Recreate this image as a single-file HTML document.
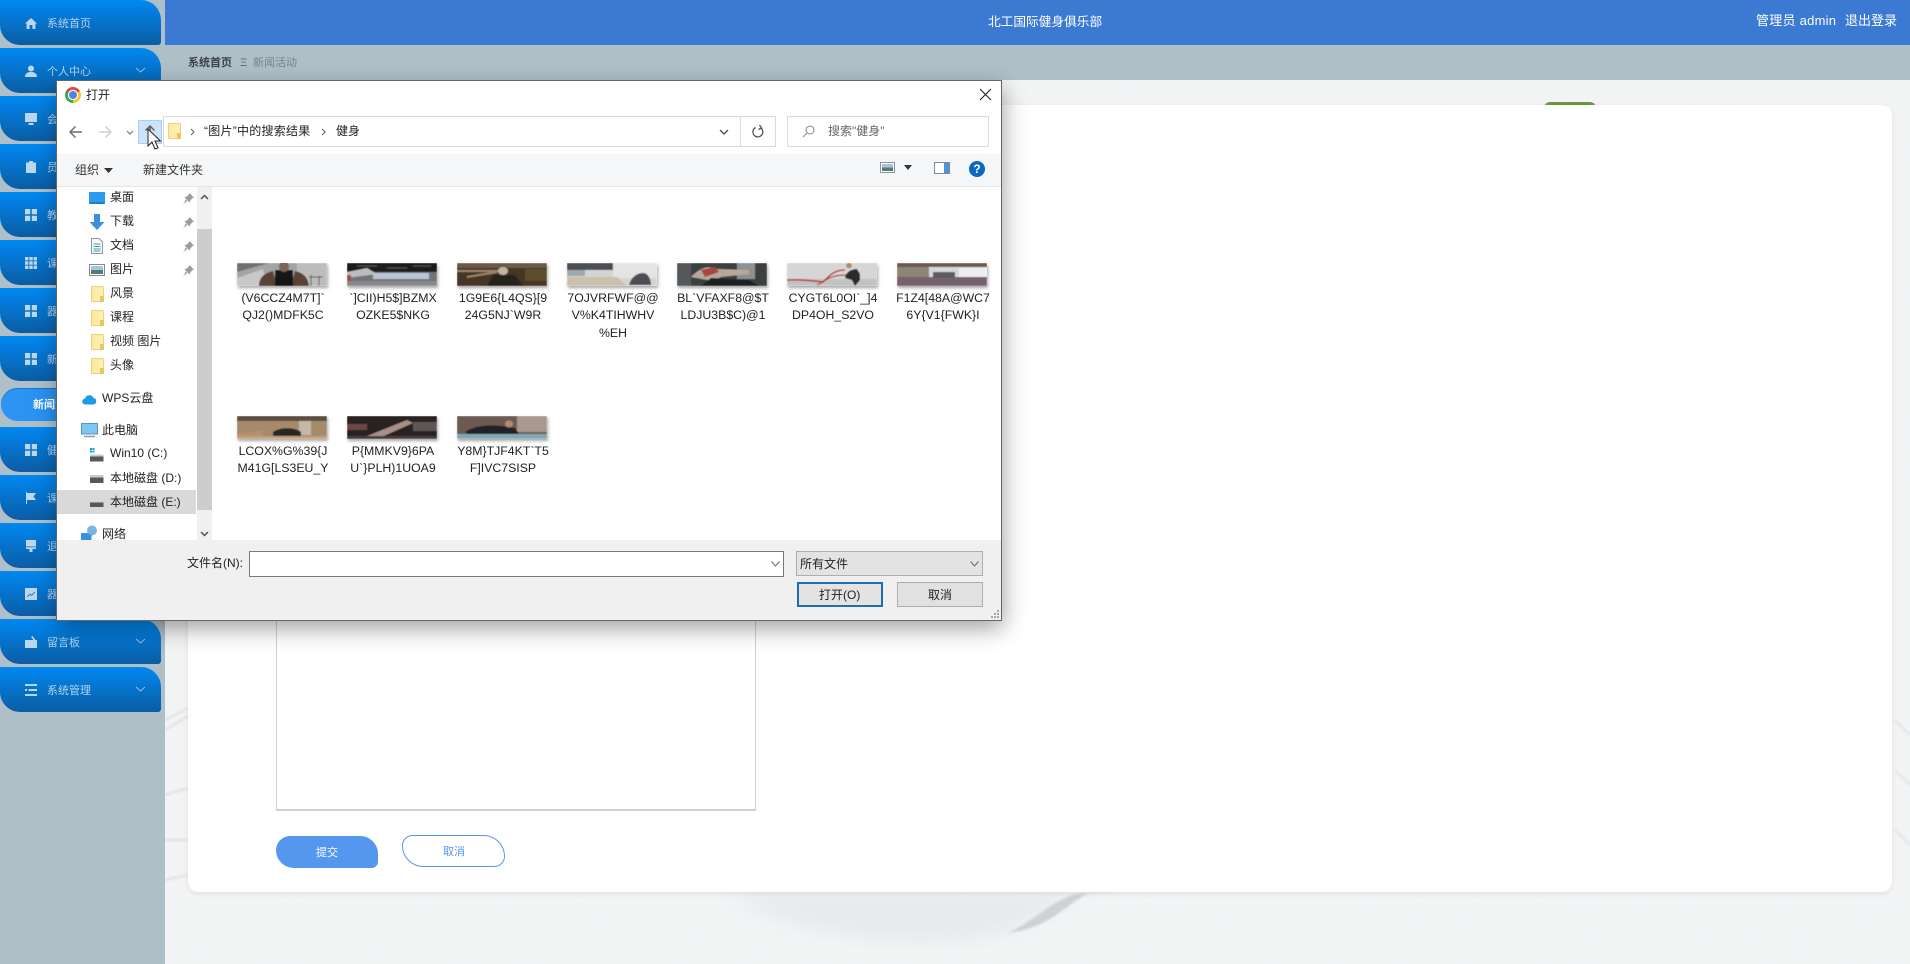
<!DOCTYPE html>
<html lang="zh-CN"><head><meta charset="utf-8"><title>打开</title>
<style>
*{box-sizing:border-box}
html,body{margin:0;padding:0;width:1910px;height:964px;overflow:hidden;background:#f5f6f7;font-family:"Liberation Sans","Noto Sans CJK SC",sans-serif;}
.a{position:absolute}
.t{position:absolute;white-space:nowrap;line-height:16px;font-size:12px;color:#222}
.side{left:0;top:0;width:165px;height:964px;background:#aebfc8}
.crumb{left:165px;top:45px;width:1745px;height:35px;background:#aebfc8}
.head{left:165px;top:0;width:1745px;height:45px;background:#3c79d3}
.it{position:absolute;left:0;width:161px;height:45px;border-radius:0 20px 3px 20px;background:linear-gradient(#0088f2,#0b5da3)}
.it span{position:absolute;left:47px;top:16px;font-size:11px;line-height:16px;color:#b4d2ee;white-space:nowrap}
.it svg.i{position:absolute;left:25px;top:17px;width:12px;height:12px;fill:#bcd6ee}
.it svg.c{position:absolute;left:135px;top:19px;width:11px;height:6px;fill:none;stroke:#8fc0ea;stroke-width:1}
.card{left:188px;top:105px;width:1704px;height:787px;background:#fff;border-radius:10px;box-shadow:0 2px 6px rgba(0,0,0,.08)}
.dlg{left:57px;top:81px;width:944px;height:539px;background:#fff;box-shadow:0 0 0 1px #666,2px 8px 22px rgba(0,0,0,.38)}
.th{position:absolute;width:90px;height:23px;box-shadow:1px 2px 3px rgba(0,0,0,.35);overflow:hidden}
.th svg{display:block;width:90px;height:23px}
.fn{position:absolute;width:110px;text-align:center;font-size:12.3px;line-height:17.3px;color:#222;transform:translateX(1px)}
.nv svg{position:absolute}
.pin{position:absolute;width:11px;height:11px;fill:#9a9a9a}
.fold{position:absolute;left:34px;width:13px;height:16px;background:linear-gradient(90deg,#fde9a0,#ffefb4);border:1px solid #ecd27a;border-radius:1px}
.fold:after{content:"";position:absolute;right:-1px;bottom:-1px;width:4px;height:6px;background:#e9c65c}
</style></head><body>
<svg class="a" width="0" height="0"><defs><filter id="b"><feGaussianBlur stdDeviation=".6"/></filter><filter id="b1"><feGaussianBlur stdDeviation="1"/></filter><filter id="b2"><feGaussianBlur stdDeviation="9"/></filter><filter id="n"><feTurbulence type="fractalNoise" baseFrequency=".9" numOctaves="2"/><feColorMatrix values="0 0 0 0 .5 0 0 0 0 .5 0 0 0 0 .5 0 0 0 .5 0"/></filter></defs></svg>

<div class="a side"></div>
<div class="a crumb"></div>
<svg class="a" style="left:165px;top:80px" width="1745" height="884">
<rect width="1745" height="884" filter="url(#n)" opacity=".16"/>
<g filter="url(#b1)" opacity=".7">
<path d="M0 640 L23 628 M0 650 L23 636 M0 715 L23 708 M0 760 L23 760 M0 800 L23 795" stroke="#d4d6d8" stroke-width="2" fill="none"/>
<path d="M1730 640 L1745 655 M1730 690 L1745 705 M1730 750 L1745 765" stroke="#d8dadc" stroke-width="2" fill="none"/>
</g>
<path d="M560 815 C660 870 780 868 843 853 C880 835 905 815 925 812Z" fill="#dcdee0" filter="url(#b2)" opacity=".45"/>
<path d="M843 853 C875 838 890 815 921 813 L960 812 L925 812 C900 825 885 848 843 853 Z" fill="#cfd1d4" filter="url(#b1)"/>
</svg>
<div class="a" style="left:1544px;top:102px;width:52px;height:6px;border-radius:6px 6px 0 0;background:#6d9a38"></div>
<div class="a card"></div>
<div class="a" style="left:276px;top:300px;width:480px;height:511px;border:1px solid #d0d0d0;border-bottom:2px solid #cfcfcf;background:#fff"></div>
<div class="a" style="left:276px;top:836px;width:102px;height:32px;background:#5596ef;border-radius:16px 20px 7px 20px"></div>
<div class="t" style="left:316px;top:845px;font-size:11px;color:#fff">提交</div>
<div class="a" style="left:402px;top:835px;width:103px;height:32px;border:1px solid #5596ef;border-radius:12px 24px 12px 24px;background:#fff"></div>
<div class="t" style="left:443px;top:844px;font-size:11px;color:#5596ef">取消</div>

<div class="a head"></div>
<div class="t" style="left:988px;top:14px;font-size:12.7px;color:#fff">北工国际健身俱乐部</div>
<div class="t" style="left:1756px;top:13px;font-size:13px;letter-spacing:.25px;color:#fff">管理员 admin</div>
<div class="t" style="left:1845px;top:13px;font-size:13px;color:#fff">退出登录</div>
<div class="t" style="left:188px;top:55px;font-size:11px;color:#3a4146;font-weight:700">系统首页</div>
<div class="t" style="left:240px;top:55px;font-size:11px;color:#5d6a72">Ξ</div>
<div class="t" style="left:253px;top:55px;font-size:11px;color:#76838b">新闻活动</div>

<div class="it" style="top:0"><svg class="i" viewBox="0 0 12 12"><path d="M6 1 0 6.5h1.6V12h3V8h2.800v4h3V6.500H12z"/></svg><span>系统首页</span></div>
<div class="it" style="top:48px"><svg class="i" viewBox="0 0 12 12"><circle cx="6" cy="3.500" r="3"/><path d="M0 12c0-3.500 2.500-5 6-5s6 1.500 6 5z"/></svg><span>个人中心</span><svg class="c" viewBox="0 0 11 6"><path d="M1 1l4.500 4L10 1"/></svg></div>
<div class="it" style="top:96px"><svg class="i" viewBox="0 0 12 12"><path d="M0 0h12v9H0zM3.500 10h5v2h-5z"/></svg><span>会员管理</span></div>
<div class="it" style="top:144px"><svg class="i" viewBox="0 0 12 12"><path d="M1 1.500h3V0h4v1.500h3V12H1zM3.500 5l2.500 2.500L8.500 5l.6.6L6.600 8l2.500 2.500-.6.5L6 8.600 3.500 11l-.6-.5L5.400 8 2.900 5.600z"/></svg><span>员工管理</span></div>
<div class="it" style="top:192px"><svg class="i" viewBox="0 0 12 12"><path d="M0 0h5.200v5.200H0zM6.800 0H12v5.200H6.800zM0 6.800h5.200V12H0zM6.800 6.800H12V12H6.800z"/></svg><span>教练管理</span></div>
<div class="it" style="top:240px"><svg class="i" viewBox="0 0 12 12"><path d="M0 0h3.400v3.400H0zM4.300 0h3.400v3.400H4.300zM8.600 0H12v3.400H8.600zM0 4.300h3.400v3.400H0zM4.300 4.300h3.400v3.400H4.300zM8.600 4.300H12v3.400H8.600zM0 8.600h3.400V12H0zM4.300 8.600h3.400V12H4.300zM8.600 8.600H12V12H8.600z"/></svg><span>课程管理</span></div>
<div class="it" style="top:288px"><svg class="i" viewBox="0 0 12 12"><path d="M0 0h5.200v5.200H0zM6.800 0H12v5.200H6.800zM0 6.800h5.200V12H0zM6.800 6.800H12V12H6.800z"/></svg><span>器材管理</span></div>
<div class="it" style="top:336px"><svg class="i" viewBox="0 0 12 12"><path d="M0 0h5.200v5.200H0zM6.800 0H12v5.200H6.800zM0 6.800h5.200V12H0zM6.800 6.800H12V12H6.800z"/></svg><span>新闻管理</span></div>
<div class="a" style="left:1px;top:388px;width:150px;height:33px;border-radius:17px;background:linear-gradient(90deg,#2f95f5,#1f86e8);box-shadow:inset 0 1px 0 #0f76d8"></div>
<div class="t" style="left:33px;top:397px;font-size:11px;color:#fff;font-weight:700">新闻活动</div>
<div class="it" style="top:427px"><svg class="i" viewBox="0 0 12 12"><path d="M0 0h5.200v5.200H0zM6.800 0H12v5.200H6.800zM0 6.800h5.200V12H0zM6.800 6.800H12V12H6.800z"/></svg><span>健身管理</span></div>
<div class="it" style="top:475px"><svg class="i" viewBox="0 0 12 12"><path d="M1 0h1v12H1zM2 1h9L8.500 4.500 11 8H2z"/></svg><span>课程报名</span></div>
<div class="it" style="top:523px"><svg class="i" viewBox="0 0 12 12"><path d="M1 0h10v6.500H1zM1 7.300h10V9H7.500v3h-3V9H1z"/></svg><span>退课管理</span></div>
<div class="it" style="top:571px"><svg class="i" viewBox="0 0 12 12"><path fill-rule="evenodd" d="M0 0h12v12H0zM2 8.500l.6.6 2.400-2.400 1.500 1.300L10 4.500l-.6-.6-3 3-1.500-1.300z"/></svg><span>器材预约</span></div>
<div class="it" style="top:619px"><svg class="i" viewBox="0 0 12 12"><path d="M0 4h8.500L6 1l1.500-1 3 4H12v8H0zM8 6.500h4v2.500H8z"/></svg><span>留言板</span><svg class="c" viewBox="0 0 11 6"><path d="M1 1l4.500 4L10 1"/></svg></div>
<div class="it" style="top:667px"><svg class="i" viewBox="0 0 12 12"><path d="M0 0h12v2H0zM0 5h2v2H0zM3.500 5H12v2H3.500zM0 10h12v2H0z"/></svg><span>系统管理</span><svg class="c" viewBox="0 0 11 6"><path d="M1 1l4.500 4L10 1"/></svg></div>

<div class="a dlg">
 <div class="a" style="left:8px;top:6px;width:16px;height:16px;border-radius:50%;background:conic-gradient(#ea4335 -60deg,#ea4335 60deg,#fbc02d 60deg,#fbc02d 180deg,#34a853 180deg,#34a853 300deg,#ea4335 300deg)"></div>
 <div class="a" style="left:12px;top:10px;width:8px;height:8px;border-radius:50%;background:#4a86e8;box-shadow:0 0 0 1.200px #fff"></div>
 <div class="t" style="left:29px;top:6px">打开</div>
 <svg class="a" style="left:922px;top:7px" width="13" height="13" viewBox="0 0 13 13" stroke="#222" stroke-width="1.100"><path d="M1 1l11 11M12 1L1 12"/></svg>

 <svg class="a" style="left:12px;top:44px" width="14" height="14" viewBox="0 0 14 14" fill="none" stroke="#6f6f6f" stroke-width="1.500"><path d="M1 7h12M6.500 1.500 1 7l5.500 5.500"/></svg>
 <svg class="a" style="left:41px;top:44px" width="14" height="14" viewBox="0 0 14 14" fill="none" stroke="#cfcfcf" stroke-width="1.500"><path d="M1 7h12M7.500 1.500 13 7l-5.500 5.500"/></svg>
 <svg class="a" style="left:69px;top:49px" width="8" height="5" viewBox="0 0 8 5" fill="none" stroke="#777" stroke-width="1.200"><path d="M1 1l3 3 3-3"/></svg>
 <div class="a" style="left:81px;top:39px;width:24px;height:24px;background:#cde4f8;border:1px solid #a3d2f5"></div>
 <svg class="a" style="left:87px;top:44px" width="12" height="12" viewBox="0 0 12 12" fill="none" stroke="#666" stroke-width="1.500"><path d="M6 12V1M1.500 5.500 6 1l4.500 4.500"/></svg>
 <svg class="a" style="left:90px;top:47px" width="16" height="24" viewBox="0 0 16 24"><path d="M1 1v17l4-4 3 7 3-1-3-7h5.500z" fill="#fff" stroke="#222" stroke-width="1"/></svg>

 <div class="a" style="left:106px;top:35px;width:613px;height:31px;border:1px solid #d9d9d9;background:#fff"></div>
 <div class="a" style="left:683px;top:35px;width:1px;height:31px;background:#d9d9d9"></div>
 <div class="fold" style="left:111px;top:42px;width:13px;height:16px"></div>
 <svg class="a" style="left:133px;top:47px" width="5" height="8" viewBox="0 0 5 8" fill="none" stroke="#666" stroke-width="1.100"><path d="M1 1l3 3-3 3"/></svg>
 <div class="t" style="left:147px;top:42px;letter-spacing:.25px">“图片”中的搜索结果</div>
 <svg class="a" style="left:264px;top:47px" width="5" height="8" viewBox="0 0 5 8" fill="none" stroke="#666" stroke-width="1.100"><path d="M1 1l3 3-3 3"/></svg>
 <div class="t" style="left:279px;top:42px">健身</div>
 <svg class="a" style="left:662px;top:48px" width="10" height="7" viewBox="0 0 10 7" fill="none" stroke="#555" stroke-width="1.400"><path d="M1 1l4 4 4-4"/></svg>
 <svg class="a" style="left:695px;top:44px" width="12" height="13" viewBox="0 0 12 13" fill="none" stroke="#555" stroke-width="1.300"><path d="M3.500 2.500A5 5 0 1 0 9 3M7.500 0 9.500 3 6.500 4.500"/></svg>
 <div class="a" style="left:730px;top:35px;width:202px;height:31px;border:1px solid #d9d9d9"></div>
 <svg class="a" style="left:745px;top:44px" width="13" height="13" viewBox="0 0 13 13" fill="none" stroke="#888" stroke-width="1"><circle cx="8" cy="5" r="4"/><path d="M5 8 1 12"/></svg>
 <div class="t" style="left:771px;top:42px;color:#666">搜索"健身"</div>

 <div class="a" style="left:0;top:73px;width:944px;height:33px;background:#f5f6f7;border-bottom:1px solid #e6e6e6"></div>
 <div class="t" style="left:18px;top:81px;color:#333">组织</div>
 <svg class="a" style="left:47px;top:87px" width="9" height="5" viewBox="0 0 9 5"><path d="M0 0h9L4.500 5z" fill="#333"/></svg>
 <div class="t" style="left:86px;top:81px;color:#333">新建文件夹</div>
 <svg class="a" style="left:823px;top:81px" width="15" height="11" viewBox="0 0 15 11"><rect x=".5" y=".5" width="14" height="10" fill="#fff" stroke="#8a94a0"/><rect x="2" y="2" width="11" height="3.500" fill="#a7c4de"/><rect x="2" y="5.500" width="11" height="3.500" fill="#4d7f72"/></svg>
 <svg class="a" style="left:847px;top:84px" width="8" height="5" viewBox="0 0 8 5"><path d="M0 0h8L4 5z" fill="#333"/></svg>
 <svg class="a" style="left:877px;top:81px" width="16" height="12" viewBox="0 0 16 12"><rect x=".5" y=".5" width="15" height="11" fill="#fff" stroke="#7f8a95"/><rect x="10" y="1" width="5" height="10" fill="#4c93dc"/></svg>
 <div class="a" style="left:912px;top:80px;width:16px;height:16px;border-radius:50%;background:#0c66c2;color:#fff;font:700 12px/16px 'Liberation Sans',sans-serif;text-align:center">?</div>

 <div class="nv">
 <svg style="left:32px;top:111px" width="16" height="12" viewBox="0 0 16 12"><rect width="16" height="12" fill="#2c9bf0"/><rect x=".7" y="10.500" width="14.600" height="1" fill="#0f5fa8"/></svg>
 <div class="t" style="left:53px;top:108px">桌面</div>
 <svg style="left:32px;top:133px" width="16" height="16" viewBox="0 0 16 16"><path d="M5 0h6v8h4.500L8 16 .5 8H5z" fill="#3b8fdc"/></svg>
 <div class="t" style="left:53px;top:132px">下载</div>
 <svg style="left:34px;top:157px" width="12" height="16" viewBox="0 0 12 16"><path d="M.5.500h7.500l3.500 3.500v11.500H.5z" fill="#f6f8fa" stroke="#8c97a2"/><path d="M2.500 6h7M2.500 8.500h7M2.500 11h7M2.500 13h7" stroke="#4aa0b4"/></svg>
 <div class="t" style="left:53px;top:156px">文档</div>
 <svg style="left:32px;top:183px" width="16" height="12" viewBox="0 0 16 12"><rect x=".5" y=".5" width="15" height="11" fill="#fff" stroke="#7f8a95"/><rect x="2" y="2" width="12" height="4" fill="#a7c4de"/><rect x="2" y="6" width="12" height="4" fill="#4d7f72"/></svg>
 <div class="t" style="left:53px;top:180px">图片</div>
 <div class="fold" style="top:205px"></div><div class="t" style="left:53px;top:204px">风景</div>
 <div class="fold" style="top:229px"></div><div class="t" style="left:53px;top:228px">课程</div>
 <div class="fold" style="top:253px"></div><div class="t" style="left:53px;top:252px">视频 图片</div>
 <div class="fold" style="top:277px"></div><div class="t" style="left:53px;top:276px">头像</div>
 <svg class="pin" style="left:126px;top:112px" viewBox="0 0 12 12"><path d="M7 0l5 5-1.500.5L8 8l-.5 2.500L1.500 4.500 4 4l2.500-2.500zM3.500 7 0 12l5-3.500z"/></svg>
 <svg class="pin" style="left:126px;top:136px" viewBox="0 0 12 12"><path d="M7 0l5 5-1.500.5L8 8l-.5 2.500L1.500 4.500 4 4l2.500-2.500zM3.500 7 0 12l5-3.500z"/></svg>
 <svg class="pin" style="left:126px;top:160px" viewBox="0 0 12 12"><path d="M7 0l5 5-1.500.5L8 8l-.5 2.500L1.500 4.500 4 4l2.500-2.500zM3.500 7 0 12l5-3.500z"/></svg>
 <svg class="pin" style="left:126px;top:184px" viewBox="0 0 12 12"><path d="M7 0l5 5-1.500.5L8 8l-.5 2.500L1.500 4.500 4 4l2.500-2.500zM3.500 7 0 12l5-3.500z"/></svg>

 <svg style="left:25px;top:312px" width="15" height="12" viewBox="0 0 15 12"><path d="M3.500 11.500a3 3 0 0 1-.5-6A4.500 4.500 0 0 1 11.500 5a3.300 3.300 0 0 1 0 6.500z" fill="#1c9be6"/></svg>
 <div class="t" style="left:45px;top:309px">WPS云盘</div>
 <svg style="left:24px;top:342px" width="17" height="15" viewBox="0 0 17 15"><rect x=".5" y=".5" width="16" height="10.500" fill="#7cc6f2" stroke="#5a94bf"/><path d="M3 13.500h11" stroke="#8a9aa6" stroke-width="1.500"/></svg>
 <div class="t" style="left:45px;top:341px">此电脑</div>
 <svg style="left:32px;top:367px" width="15" height="14" viewBox="0 0 15 14"><path d="M1 0h2v2H1zM3.500 0h2v2h-2zM1 2.500h2v2H1zM3.500 2.500h2v2h-2z" fill="#12a0dc"/><rect x="1" y="8" width="13.500" height="5.500" fill="#55595c"/><rect x="1" y="6.500" width="13.500" height="2" fill="#c9cbcd"/></svg>
 <div class="t" style="left:53px;top:364px">Win10 (C:)</div>
 <svg style="left:32px;top:392px" width="15" height="11" viewBox="0 0 15 11"><rect x="1" y="4" width="13.500" height="6" fill="#55595c"/><rect x="1" y="2" width="13.500" height="2.500" fill="#c9cbcd"/></svg>
 <div class="t" style="left:53px;top:389px">本地磁盘 (D:)</div>
 <div class="a" style="left:0;top:409px;width:139px;height:24px;background:#d9d9d9"></div>
 <svg style="left:32px;top:416px" width="15" height="11" viewBox="0 0 15 11"><rect x="1" y="5" width="13.500" height="5" fill="#55595c"/><rect x="1" y="4" width="13.500" height="1.500" fill="#d0d2d4"/></svg>
 <div class="t" style="left:53px;top:413px">本地磁盘 (E:)</div>
 <svg style="left:24px;top:444px" width="17" height="15" viewBox="0 0 17 15"><circle cx="11" cy="5.500" r="5" fill="#7bb6e0"/><path d="M0 8h7l1.500 1.500h2V15H0z" fill="#3a93d8"/></svg>
 <div class="t" style="left:45px;top:445px">网络</div>
 </div>
 <div class="a" style="left:140px;top:106px;width:15px;height:353px;background:#f0f0f0"></div>
 <div class="a" style="left:140px;top:148px;width:15px;height:281px;background:#cdcdcd"></div>
 <svg class="a" style="left:143px;top:113px" width="9" height="6" viewBox="0 0 9 6" fill="none" stroke="#505050" stroke-width="1.500"><path d="M1 5l3.500-3.500L8 5"/></svg>
 <svg class="a" style="left:143px;top:450px" width="9" height="6" viewBox="0 0 9 6" fill="none" stroke="#505050" stroke-width="1.500"><path d="M1 1l3.500 3.500L8 1"/></svg>

 <div class="th" style="left:180px;top:182px"><svg viewBox="0 0 90 23"><g filter="url(#b)"><rect width="90" height="23" fill="#a4a4a4"/><path d="M0 9 32 0H0z" fill="#6f6f6f"/><path d="M0 23V15L26 6 30 23z" fill="#c8c8c8"/><rect x="60" width="30" height="23" fill="#bcbcbc"/><path d="M22 23c0-9 6-13 14-15l4 15zM72 23c-1-9-6-13-14-15l-4 15z" fill="#5a4236"/><rect x="38" y="7" width="18" height="16" fill="#141414"/><ellipse cx="47" cy="3.500" rx="5" ry="5.500" fill="#7d6557"/><path d="M74 12v11M82 13v10M72 14h14" stroke="#555"/></g></svg></div>
 <div class="fn" style="left:170px;top:209px">(V6CCZ4M7T]`<br>QJ2()MDFK5C</div>
 <div class="th" style="left:290px;top:182px"><svg viewBox="0 0 90 23"><g filter="url(#b)"><rect width="90" height="23" fill="#6f7478"/><rect width="90" height="9" fill="#1b1b1b"/><path d="M10 3h20M40 5h20M66 3h18" stroke="#555"/><path d="M0 9 20 5 30 11 0 15z" fill="#bdbdbd"/><rect x="26" y="10" width="56" height="6" fill="#b9c5d6"/><rect y="12" width="4" height="8" fill="#a24a4a"/><rect y="18" width="90" height="5" fill="#88888c"/></g></svg></div>
 <div class="fn" style="left:280px;top:209px">`]CII)H5$]BZMX<br>OZKE5$NKG</div>
 <div class="th" style="left:400px;top:182px"><svg viewBox="0 0 90 23"><g filter="url(#b)"><rect width="90" height="23" fill="#463526"/><rect width="90" height="5" fill="#6a5a46"/><path d="M0 8h50M10 14l30-5" stroke="#a08668" stroke-width="2"/><ellipse cx="46" cy="8" rx="5" ry="4" fill="#c4b2a2"/><path d="M36 12h22l8 11H30z" fill="#25201c"/><rect x="68" y="6" width="22" height="12" fill="#5b4d2d"/></g></svg></div>
 <div class="fn" style="left:390px;top:209px">1G9E6{L4QS}[9<br>24G5NJ`W9R</div>
 <div class="th" style="left:510px;top:182px"><svg viewBox="0 0 90 23"><g filter="url(#b)"><rect width="90" height="23" fill="#d4d4d2"/><rect width="46" height="7" fill="#4b4f52"/><rect x="46" width="44" height="15" fill="#e4e4e4"/><rect x="0" y="7" width="18" height="6" fill="#9fa8ac"/><path d="M0 14h50L60 23H0z" fill="#c9c1ae"/><path d="M62 22c2-8 8-12 14-12s8 8 8 12z" fill="#4c5054"/></g></svg></div>
 <div class="fn" style="left:500px;top:209px">7OJVRFWF@@<br>V%K4TIHWHV<br>%EH</div>
 <div class="th" style="left:620px;top:182px"><svg viewBox="0 0 90 23"><g filter="url(#b)"><rect width="90" height="23" fill="#3e4040"/><rect x="60" width="18" height="16" fill="#8e9092"/><rect y="0" width="14" height="23" fill="#55595a"/><path d="M14 14c8-8 16-12 24-8l34 1v4l-28 3-8 4z" fill="#b9a79c"/><path d="M24 7l14-3 4 5-14 5z" fill="#a5463c"/><path d="M24 23l10-8 38 2 10 6z" fill="#1f2022"/></g></svg></div>
 <div class="fn" style="left:610px;top:209px">BL`VFAXF8@$T<br>LDJU3B$C)@1</div>
 <div class="th" style="left:730px;top:182px"><svg viewBox="0 0 90 23"><g filter="url(#b)"><rect width="90" height="23" fill="#d6d6d6"/><rect y="16" width="90" height="7" fill="#c2c2c2"/><path d="M0 17c14-1 28 1 36 2 8-8 12-12 22-12" stroke="#b93a3a" stroke-width="1.600" fill="none"/><path d="M30 22c8-4 12-10 30-10" stroke="#b93a3a" stroke-width="1.200" fill="none"/><path d="M58 15c1-6 6-9 12-9l3 5v6l-5 6-3-6z" fill="#2a2a2a"/><circle cx="62" cy="2.500" r="2.800" fill="#b08a68"/></g></svg></div>
 <div class="fn" style="left:720px;top:209px">CYGT6L0OI`_]4<br>DP4OH_S2VO</div>
 <div class="th" style="left:840px;top:182px"><svg viewBox="0 0 90 23"><g filter="url(#b)"><rect width="90" height="23" fill="#d4d8dc"/><rect width="90" height="4" fill="#6c5a4c"/><rect y="4" width="32" height="10" fill="#8f8478"/><rect x="62" y="5" width="28" height="9" fill="#eceef0"/><rect y="14" width="90" height="9" fill="#74626c"/><rect x="36" y="9" width="22" height="6" fill="#5d5c60"/></g></svg></div>
 <div class="fn" style="left:830px;top:209px">F1Z4[48A@WC7<br>6Y{V1{FWK}I</div>
 <div class="th" style="left:180px;top:335px"><svg viewBox="0 0 90 23"><g filter="url(#b)"><rect width="90" height="23" fill="#a68a6c"/><rect width="90" height="5" fill="#5b4d42"/><rect x="62" y="5" width="12" height="14" fill="#c4b8a8"/><path d="M0 18 26 14v9H0z" fill="#b49070"/><path d="M36 16c6-5 22-5 28 0v5H36z" fill="#2a2724"/><rect y="20" width="90" height="3" fill="#c2a07a"/></g></svg></div>
 <div class="fn" style="left:170px;top:362px">LCOX%G%39{J<br>M41G[LS3EU_Y</div>
 <div class="th" style="left:290px;top:335px"><svg viewBox="0 0 90 23"><g filter="url(#b)"><rect width="90" height="23" fill="#2c2222"/><path d="M20 20 60 4l6 3L30 23z" fill="#a89088"/><rect x="66" y="6" width="24" height="9" fill="#5f5656"/><path d="M0 8h20v6H0z" fill="#6a4a44"/><rect y="20" width="90" height="3" fill="#4a3c3c"/></g></svg></div>
 <div class="fn" style="left:280px;top:362px">P{MMKV9}6PA<br>U`}PLH)1UOA9</div>
 <div class="th" style="left:400px;top:335px"><svg viewBox="0 0 90 23"><g filter="url(#b)"><rect width="90" height="23" fill="#6d5a52"/><rect x="60" width="30" height="16" fill="#a89a90"/><path d="M8 16c12-8 30-8 50-4l4 6-50 1z" fill="#222426"/><ellipse cx="52" cy="8" rx="4" ry="3.500" fill="#b48a70"/><rect y="18" width="90" height="5" fill="#7fa8b4"/></g></svg></div>
 <div class="fn" style="left:390px;top:362px">Y8M}TJF4KT`T5<br>F]IVC7SISP</div>

 <div class="a" style="left:0;top:459px;width:944px;height:80px;background:#f0f0f0"></div>
 <div class="t" style="left:130px;top:474px">文件名(N):</div>
 <div class="a" style="left:192px;top:470px;width:535px;height:26px;background:#fff;border:1px solid #7a7a7a"></div>
 <svg class="a" style="left:714px;top:480px" width="9" height="6" viewBox="0 0 9 6" fill="none" stroke="#666"><path d="M.5.500 4.500 5l4-4.500"/></svg>
 <div class="a" style="left:739px;top:470px;width:187px;height:25px;background:#e3e3e3;border:1px solid #aeaeae"></div>
 <div class="t" style="left:743px;top:475px">所有文件</div>
 <svg class="a" style="left:913px;top:480px" width="9" height="6" viewBox="0 0 9 6" fill="none" stroke="#666"><path d="M.5.500 4.500 5l4-4.500"/></svg>
 <div class="a" style="left:740px;top:501px;width:86px;height:25px;background:#e3e3e3;border:2px solid #1f6eb4"></div>
 <div class="t" style="left:762px;top:506px">打开(O)</div>
 <div class="a" style="left:840px;top:501px;width:86px;height:25px;background:#e1e1e1;border:1px solid #adadad"></div>
 <div class="t" style="left:871px;top:506px">取消</div>
 <svg class="a" style="left:933px;top:528px" width="10" height="10" viewBox="0 0 10 10" fill="#a8a8a8"><path d="M7 1h2v2H7zM4 4h2v2H4zM7 4h2v2H7zM1 7h2v2H1zM4 7h2v2H4zM7 7h2v2H7z"/></svg>
</div>
</body></html>
